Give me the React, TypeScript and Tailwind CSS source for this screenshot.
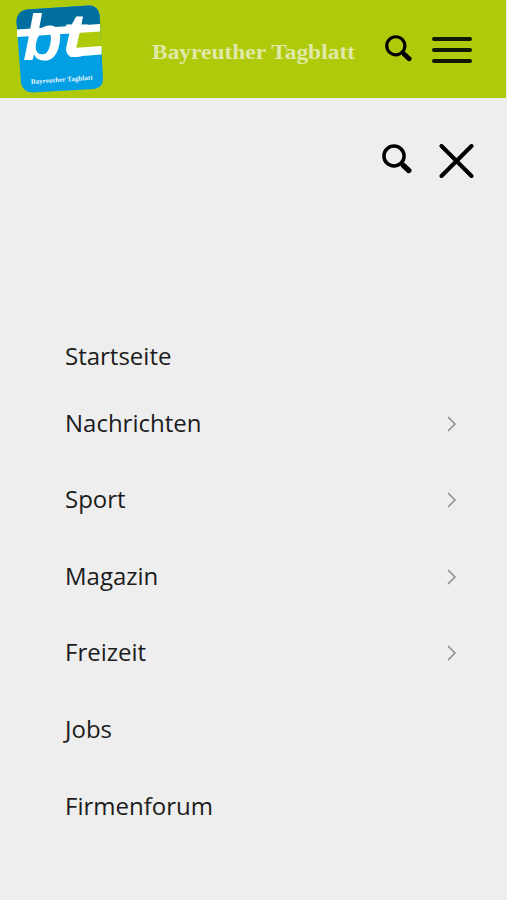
const navItems = [
  { label: "Nachrichten", hasChildren: true },
  { label: "Sport", hasChildren: true },
  { label: "Magazin", hasChildren: true },
  { label: "Freizeit", hasChildren: true },
  { label: "Jobs", hasChildren: false },
  { label: "Firmenforum", hasChildren: false },
];

const Logo: React.FC = () => (
  <svg viewBox="0 -3 90 93" className="w-[90px] h-[93px] shrink-0">
    <defs>
      <clipPath id="badge">
        <path d="M13 6.5 L75 2.5 Q84 2.5 85.5 12 L89 76 Q89 84.5 80 86 L19 89.5 Q9 89.5 7 80 L2.5 18 Q3 8 13 6.5 Z" />
      </clipPath>
    </defs>
    <g clipPath="url(#badge)">
      <rect width="90" height="90" fill="#009fe3" />
      <polygon points="0,0 90,0 90,24 0,32" fill="#006f9f" />
      <polygon points="64,26 90,24 90,47 59,49" fill="#afca0b" />
    </g>
    {/* Crossbar shared by both letters, plus the long foot of the t */}
    <polygon points="3,26.5 86,21 86,28.5 3,34" fill="#fff" />
    <polygon points="53,45.5 87.5,43 87.5,51.5 56,54" fill="#fff" />
    <text x="9" y="57" fontSize="65" textLength="39" lengthAdjust="spacingAndGlyphs" fill="#fff" className="font-['Liberation_Sans',sans-serif] font-bold italic">b</text>
    <text x="49" y="53" fontSize="60" textLength="22" lengthAdjust="spacingAndGlyphs" fill="#fff" stroke="#fff" strokeWidth="1" className="font-['Liberation_Sans',sans-serif] font-bold italic">t</text>
    <text x="17" y="81" fontSize="7" fill="#e8f6fd" textLength="62" transform="rotate(-4 17 81)" className="font-['Liberation_Serif',serif] font-bold">
      Bayreuther Tagblatt
    </text>
  </svg>
);

const SearchIcon: React.FC<{ className: string }> = ({ className }) => (
  <svg viewBox="0 0 28 28" fill="none" stroke="#000" className={className}>
    <circle cx="11.2" cy="11.2" r="9.4" strokeWidth="3.3" />
    <path d="M17.5 17.5 L19.5 19.5" strokeWidth="3.4" />
    <path d="M20 20 L25 24.7" strokeWidth="5" strokeLinecap="round" />
  </svg>
);

export default function App() {
  return (
    <div className="w-[507px] h-[900px] overflow-hidden bg-[#eeeeee] font-['Open_Sans',sans-serif] text-[#1c1c1c]">
      <header className="flex h-[98px] w-[506px] items-start bg-[#afca0b] pl-[14px]">
        <Logo />
        <svg viewBox="0 0 206 30" className="ml-[47px] mt-[38px] h-[30px] w-[206px]">
          <text x="1" y="20.5" fontSize="22" textLength="203" lengthAdjust="spacingAndGlyphs" fill="#e0e9a8" className="font-['Liberation_Serif',serif] font-bold">
            Bayreuther Tagblatt
          </text>
        </svg>
        <SearchIcon className="ml-[28px] mt-[35px] h-[27px] w-[27px]" />
        <div className="ml-[20px] mt-[37px] flex w-[40px] flex-col gap-[7px]">
          <span className="h-1 rounded-full bg-[#111700]" />
          <span className="h-1 rounded-full bg-[#111700]" />
          <span className="h-1 rounded-full bg-[#111700]" />
        </div>
      </header>

      <div className="flex h-[220px] items-start pl-[382px] pt-[46px]">
        <SearchIcon className="h-[30px] w-[30px]" />
        <svg viewBox="0 0 36 36" className="ml-[27px] h-9 w-9" stroke="#000" strokeWidth="4" strokeLinecap="round">
          <path d="M2.5 2 L32.5 32 M32.5 2 L2.5 32" />
        </svg>
      </div>

      <nav className="pl-[65px] pr-[50px] text-[24px]">
        <a className="flex h-[66.4px] items-center pt-[9px]">Startseite</a>
        {navItems.map((item) => (
          <a key={item.label} className="flex h-[76.6px] items-center justify-between">
            <span>{item.label}</span>
            {item.hasChildren && (
              <svg viewBox="0 0 10 16" className="mt-[2px] h-4 w-[10px]" fill="none" stroke="#8d8d8d" strokeWidth="1.5">
                <path d="M1 1 L8 8 L1 15" />
              </svg>
            )}
          </a>
        ))}
      </nav>
    </div>
  );
}
